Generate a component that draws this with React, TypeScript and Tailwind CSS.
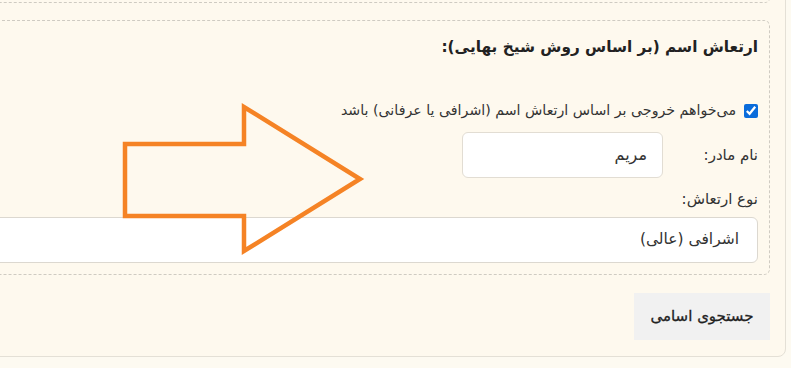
import React from "react";

export default function App() {
  return (
    <div
      dir="rtl"
      className="relative w-[791px] h-[368px] overflow-hidden bg-[#fdfaf1] text-[#333]"
      style={{ fontFamily: '"DejaVu Sans", sans-serif' }}
    >
      {/* outer card */}
      <div className="-mt-[20px] -ml-[60px] mr-[5px] border border-[#e4e0d6] rounded-[8px] bg-[#fef9ee] px-[15px] pb-[16px]">
        {/* previous section (cut off) */}
        <div className="h-[22px] border border-t-0 border-dashed border-[#cfcbc2] rounded-b-[5px]" />

        <fieldset className="mt-[17px] border border-dashed border-[#cfcbc2] rounded-[6px] pr-[11px] pl-0 pt-[15px] pb-[11px]">
          <h3 className="h-[22px] leading-[22px] text-[15.3px] font-bold text-[#222]">
            ارتعاش اسم (بر اساس روش شیخ بهایی):
          </h3>

          <label className="mt-[43px] flex items-center gap-[8px] h-[20px] text-[14.2px]">
            <input
              type="checkbox"
              defaultChecked
              className="w-[14px] h-[14px] m-0 accent-[#0a6cdb]"
            />
            <span>می‌خواهم خروجی بر اساس ارتعاش اسم (اشرافی یا عرفانی) باشد</span>
          </label>

          <div className="mt-[11px] flex items-center gap-[15px]">
            <span className="w-[80px] text-[15px] text-right">نام مادر:</span>
            <div className="w-[201px] h-[46px] bg-white border border-[#e2ddd3] rounded-[6px] px-[15px] flex items-center text-[16px]">
              مریم
            </div>
          </div>

          <div className="mt-[11px] h-[20px] leading-[20px] text-[15px]">نوع ارتعاش:</div>

          <div className="mt-[8px] h-[46px] bg-white border border-[#dcd8d0] rounded-[6px] pr-[18px] flex items-center text-[15.5px]">
            اشرافی (عالی)
          </div>
        </fieldset>

        <button className="mt-[18px] w-[136px] h-[47px] bg-[#f1f1f1] text-[15px] text-[#222] flex items-center justify-center [-webkit-text-stroke:0.3px_#222]">
          جستجوی اسامی
        </button>
      </div>

      {/* annotation arrow */}
      <svg
        className="absolute left-0 top-0 pointer-events-none"
        width="791"
        height="368"
        viewBox="0 0 791 368"
      >
        <polygon
          points="125,144 244,144 244,107 360,179 244,251 244,216 125,216"
          fill="none"
          stroke="#f58325"
          strokeWidth="4.5"
          strokeLinejoin="miter"
        />
      </svg>
    </div>
  );
}
